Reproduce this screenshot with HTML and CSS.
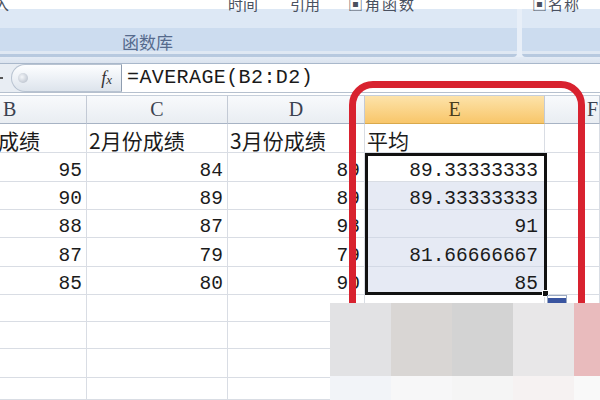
FILE: index.html
```html
<!DOCTYPE html>
<html lang="zh">
<head>
<meta charset="utf-8">
<title>AVERAGE</title>
<link rel="stylesheet" href="styles.css">
</head>
<body>
<div class="app">
  <div class="ribbon">
    <div class="group g1">
      <div class="cmds"><span class="c1">入</span><span class="c2">时间</span><span class="c3">引用</span><span class="c4">▣角函数</span></div>
      <div class="glabel">函数库</div>
    </div>
    <div class="group g2">
      <div class="cmds"><span class="c5">▣名称</span></div>
    </div>
  </div>
  <div class="band"></div>
  <div class="fbar">
    <div class="namebox"><span class="dash"></span></div>
    <div class="pill"><span class="knob"></span><span class="fx"><i>f</i><i class="x">x</i></span></div>
    <div class="finput">=AVERAGE(B2:D2)</div>
  </div>
  <div class="sheet">
    <div class="ch">B</div><div class="ch">C</div><div class="ch">D</div><div class="ch sel-h">E</div><div class="ch">F</div>

    <div class="c t clip">成绩</div><div class="c t">2月份成绩</div><div class="c t">3月份成绩</div><div class="c t">平均</div><div class="c"></div>

    <div class="c n">95</div><div class="c n">84</div><div class="c n">89</div><div class="c n act">89.33333333</div><div class="c"></div>
    <div class="c n">90</div><div class="c n">89</div><div class="c n">89</div><div class="c n tint">89.33333333</div><div class="c"></div>
    <div class="c n">88</div><div class="c n">87</div><div class="c n">98</div><div class="c n tint">91</div><div class="c"></div>
    <div class="c n">87</div><div class="c n">79</div><div class="c n">79</div><div class="c n tint">81.66666667</div><div class="c"></div>
    <div class="c n">85</div><div class="c n">80</div><div class="c n">90</div><div class="c n tint">85</div><div class="c"></div>

    <div class="c"></div><div class="c"></div><div class="c"></div><div class="c"></div><div class="c"></div>
    <div class="c"></div><div class="c"></div><div class="c"></div><div class="c"></div><div class="c"></div>
    <div class="c"></div><div class="c"></div><div class="c"></div><div class="c"></div><div class="c"></div>
    <div class="c"></div><div class="c"></div><div class="c"></div><div class="c"></div><div class="c"></div>
    <div class="c"></div><div class="c"></div><div class="c"></div><div class="c"></div><div class="c"></div>

    <div class="sel"><span class="handle"></span><span class="opts"></span></div>
  </div>
  <div class="annot"></div>
  <div class="mosaic">
    <div class="m m1"></div><div class="m m2"></div><div class="m m3"></div><div class="m m4"></div><div class="m m5"></div>
    <div class="m m6"></div><div class="m m7"></div><div class="m m8"></div><div class="m m9"></div><div class="m m10"></div>
  </div>
</div>
</body>
</html>
```

FILE: styles.css
```css
* { box-sizing: border-box; }
html, body { margin: 0; padding: 0; }
body {
  width: 600px;
  height: 400px;
  overflow: hidden;
  background: #fff;
  font-family: "Noto Sans CJK SC", "Liberation Sans", sans-serif;
}
.app {
  position: relative;
  width: 600px;
  height: 400px;
  overflow: hidden;
  background: #fff;
}

/* ribbon */
.ribbon {
  height: 57px;
  display: flex;
  gap: 5px;
  background: linear-gradient(#ffffff 0 9px, #e8eff8 9px);
}
.group {
  display: flex;
  flex-direction: column;
  background: linear-gradient(#ffffff 0 9px, #dde8f5 9px 28px, #ccdcef 28px 51px, #dfe8f3 51px 54px, #b7c9df 54px);
}
.g1 { width: 517px; border-radius: 0 0 4px 0; }
.g2 { flex: 1; border-radius: 0 0 0 4px; }
.cmds {
  height: 13px;
  overflow: hidden;
  display: flex;
  font-size: 15px;
  line-height: 15px;
  color: #4a5160;
  white-space: nowrap;
}
.cmds span { margin-top: -4px; display: block; }
.c1 { margin-left: -6px; }
.c2 { margin-left: 219px; }
.c3 { margin-left: 32px; }
.c4 { margin-left: 28px; letter-spacing: 2px; }
.c5 { margin-left: 10px; letter-spacing: 1px; }
.glabel {
  margin-top: 19px;
  padding-left: 122px;
  font-size: 17px;
  line-height: 20px;
  color: #566b8d;
}

.band {
  height: 6px;
  background: linear-gradient(#e3ebf5, #dbe3ee);
}

/* formula bar */
.fbar {
  height: 30px;
  display: flex;
  border-top: 1px solid #a9b8cb;
  border-bottom: 1px solid #b5c0ce;
  background: #e8edf3;
}
.namebox {
  width: 11px;
  display: flex;
  align-items: center;
}
.dash {
  width: 3px;
  height: 2px;
  background: #555;
  margin-top: -1px;
}
.pill {
  width: 111px;
  display: flex;
  align-items: center;
  justify-content: space-between;
  padding: 0 9px 0 6px;
  border: 1px solid #b8c3d1;
  border-right: 1px solid #8f9db0;
  border-radius: 14px 0 0 14px;
  background: linear-gradient(#fdfeff, #edf1f6 50%, #dde4ec);
}
.knob {
  width: 10px;
  height: 10px;
  border-radius: 50%;
  background: radial-gradient(circle at 40% 40%, #f4f6f9, #aeb7c4);
}
.fx {
  font-family: "Liberation Serif", serif;
  font-size: 18px;
  color: #333;
  line-height: 1;
}
.fx .x { font-size: 13px; }
.finput {
  flex: 1;
  background: #fff;
  padding-left: 5px;
  font-family: "Liberation Mono", monospace;
  font-size: 20px;
  letter-spacing: 0.4px;
  line-height: 28px;
  color: #1a1a1a;
  white-space: nowrap;
}

/* sheet */
.sheet {
  position: relative;
  margin-top: 2px;
  display: grid;
  grid-template-columns: 87px 141px 137px 180px 55px;
  grid-template-rows: 29px 29px 29px 28px 28px 29px 28px 27px 27px 29px 22px;
}
.ch {
  display: flex;
  align-items: center;
  justify-content: center;
  font-family: "Liberation Serif", serif;
  font-size: 20px;
  color: #3b4250;
  background: linear-gradient(#f8fafc, #e9edf2);
  border-right: 1px solid #c3cad5;
  border-bottom: 1px solid #a7b3c4;
  border-top: 1px solid #c6cfdb;
}
.ch:first-child { justify-content: flex-start; padding-left: 3px; }
.ch:nth-child(5) { justify-content: flex-start; padding-left: 42px; }
.ch.sel-h {
  background: linear-gradient(#fde3aa, #f8c66a);
  color: #4a3d1c;
  border-bottom-color: #d9a94c;
}
.c {
  border-right: 1px solid #d9dde4;
  border-bottom: 1px solid #d9dde4;
  color: #1b1b1b;
  white-space: nowrap;
  overflow: hidden;
}
.t {
  display: flex;
  align-items: flex-end;
  padding-left: 2px;
  font-size: 21px;
  line-height: 24px;
}
.clip { padding-left: 0; text-indent: -2px; }
.n {
  display: flex;
  align-items: flex-end;
  justify-content: flex-end;
  padding-right: 4px;
  font-family: "Liberation Mono", monospace;
  font-size: 19.5px;
  line-height: 17px;
  padding-bottom: 1px;
}
.n.act, .n.tint { padding-right: 6px; }
.tint { background: #e6eaf4; border-bottom-color: #d3d9e5; }
.act { background: #fff; }

/* selection frame: overlays the E2:E6 cells */
.sel {
  position: absolute;
  grid-column: 4 / 5;
  grid-row: 3 / 8;
  top: 0;
  bottom: 0;
  left: 0;
  right: -2px;
  border: 3px solid #111;
}
.handle {
  position: absolute;
  right: -5px;
  bottom: -5px;
  width: 7px;
  height: 7px;
  background: #111;
  border: 1px solid #fff;
}
.opts {
  position: absolute;
  left: calc(100% + 3px);
  top: calc(100% + 3px);
  width: 20px;
  height: 12px;
  border: 1px solid #9aa9c2;
  background: linear-gradient(#fff 0 2px, #3a55a0 2px);
}

/* annotation */
.annot {
  position: absolute;
  left: 349px;
  top: 81px;
  width: 236px;
  height: 260px;
  border: 7px solid #d8222f;
  border-radius: 24px;
}

/* mosaic blur overlay */
.mosaic {
  position: absolute;
  left: 330px;
  top: 303px;
  width: 270px;
  height: 97px;
  display: grid;
  grid-template-columns: 61px 61px 61px 61px 26px;
  grid-template-rows: 73px 24px;
}
.m1 { background: #e2e2e4; }
.m2 { background: #d9d6d4; }
.m3 { background: #d3d3d3; }
.m4 { background: #e8e7e8; }
.m5 { background: #e9bbbd; }
.m6 { background: #f2f4f8; }
.m7 { background: #f7f7f8; }
.m8 { background: #f5f5f5; }
.m9 { background: #f6f2f2; }
.m10 { background: #f9f9f9; }
```
